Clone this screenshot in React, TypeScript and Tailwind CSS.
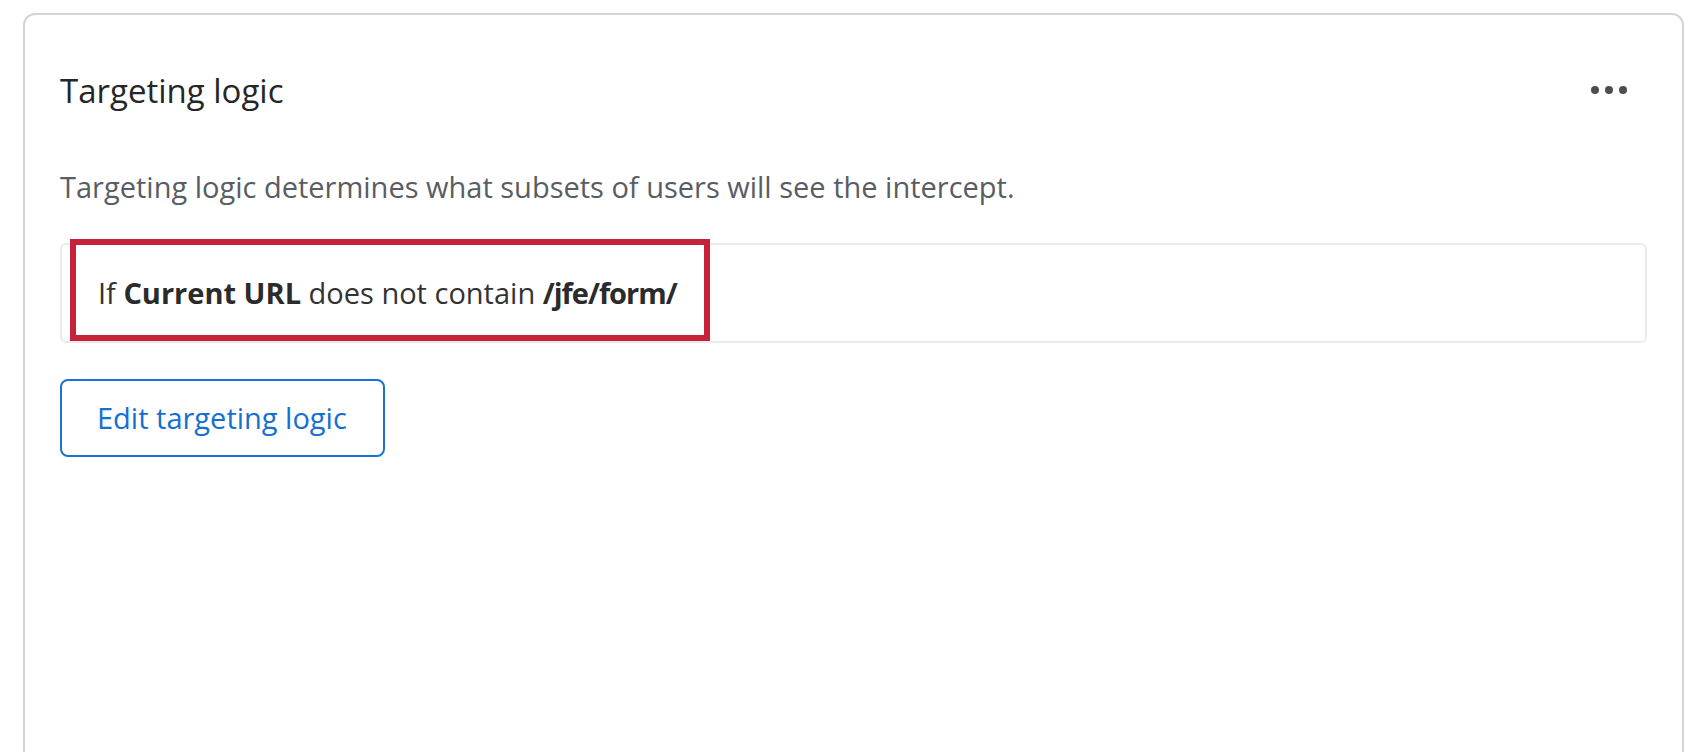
import React from 'react'

function MoreDots() {
  return (
    <button className="flex items-center gap-[6px] h-[20px]" aria-label="More options">
      <span className="block w-[8px] h-[8px] rounded-full bg-[#4b4f55]" />
      <span className="block w-[8px] h-[8px] rounded-full bg-[#4b4f55]" />
      <span className="block w-[8px] h-[8px] rounded-full bg-[#4b4f55]" />
    </button>
  )
}

export default function App() {
  return (
    <div className="w-[1700px] h-[752px] overflow-hidden bg-white pl-[23px] pt-[13px] font-['Open_Sans',sans-serif]">
      <div className="w-[1661px] h-[820px] border-2 border-[#d4d4d4] rounded-t-[12px] px-[35px] pt-[45px]">
        <div className="h-[60px] flex items-center justify-between pr-[20px]">
          <h2 className="text-[33px] leading-none text-[#262626]">Targeting logic</h2>
          <MoreDots />
        </div>

        <p className="mt-[46px] h-[40px] flex items-center text-[29px] leading-none text-[#595d63]">
          Targeting logic determines what subsets of users will see the intercept.
        </p>

        <div className="relative mt-[37px] h-[100px] border-2 border-[#ebebeb] rounded-[6px] flex items-center pl-[36px] text-[29px] text-[#333333]">
          <span>
            If <b className="font-bold text-[#2b2b2b]">Current URL</b> does not contain{' '}
            <b className="font-bold text-[#2b2b2b] tracking-[-1px]">/jfe/form/</b>
          </span>
          <div className="absolute left-[8px] top-[-6px] w-[640px] h-[102px] border-[6px] border-[#c6223a] pointer-events-none" />
        </div>

        <button className="mt-[36px] h-[78px] w-[325px] border-2 border-[#1a73d2] rounded-[8px] flex items-center pl-[35px] text-[29px] text-[#1470d0]">
          Edit targeting logic
        </button>
      </div>
    </div>
  )
}
